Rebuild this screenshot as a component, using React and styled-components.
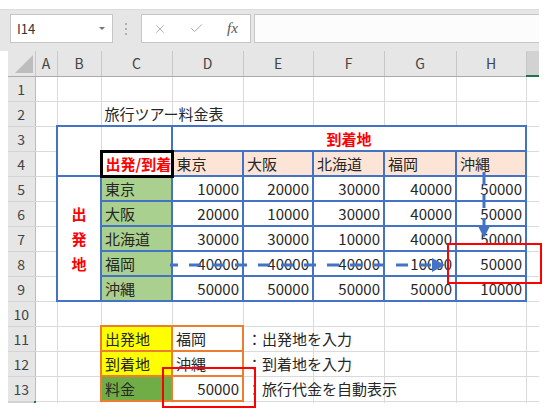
import styled, { createGlobalStyle } from "styled-components";
import { X, Check } from "lucide-react";

const BLUE = "#4472c4";
const ORANGE = "#ed7d31";
const GRID = "#dadada";
const RED = "#ff0000";

const GlobalStyle = createGlobalStyle`
  body {
    margin: 0;
    background: #fff;
    font-family: "Noto Sans CJK JP", "Noto Sans", sans-serif;
  }
`;

const Window = styled.div`
  position: relative;
  width: 548px;
  height: 418px;
  overflow: hidden;
  padding-top: 9px;
  box-sizing: border-box;
`;

const FormulaBar = styled.div`
  width: 539px;
  height: 42px;
  box-sizing: border-box;
  background: #e6e6e6;
  border-top: 1px solid #dcdcdc;
  padding: 4px 0 0 10px;
  display: flex;
  align-items: flex-start;
`;

const NameBox = styled.div`
  width: 103px;
  height: 29px;
  box-sizing: border-box;
  background: #fff;
  border: 1px solid #c6c6c6;
  padding: 0 6px;
  display: flex;
  align-items: center;
  font-size: 13px;
  color: #333;
`;

const Caret = styled.span`
  margin-left: auto;
  margin-right: 1px;
  border-left: 3px solid transparent;
  border-right: 3px solid transparent;
  border-top: 3px solid #777;
`;

const Grip = styled.div`
  margin: 9px 0 0 12px;
  display: flex;
  flex-direction: column;
  gap: 3px;
  span {
    width: 2px;
    height: 2px;
    background: #b0b0b0;
  }
`;

const IconBox = styled.div`
  margin-left: 14px;
  width: 110px;
  height: 29px;
  box-sizing: border-box;
  background: #fff;
  border: 1px solid #c6c6c6;
  padding-left: 11px;
  display: flex;
  align-items: center;
  gap: 22px;
  color: #a6a6a6;
`;

const Fx = styled.span`
  font-family: "Liberation Serif", serif;
  font-style: italic;
  font-size: 15px;
  color: #555;
  margin-left: 1px;
`;

const FormulaInput = styled.div`
  margin-left: 3px;
  flex: 1;
  height: 29px;
  box-sizing: border-box;
  background: #fcfcfc;
  border: 1px solid #c6c6c6;
  border-right: none;
`;

const SheetClip = styled.div`
  margin-left: 8px;
  width: 531px;
  overflow: hidden;
`;

const Sheet = styled.table`
  border-collapse: collapse;
  table-layout: fixed;
  width: 588px;
`;

const Row = styled.tr`
  height: ${(p) => p.$h || 25}px;
`;

const ColHead = styled.th`
  padding: 0;
  font-weight: normal;
  font-size: 14px;
  color: #444;
  text-align: center;
  background: ${(p) => (p.$active ? "#d2d2d2" : "#e6e6e6")};
  border: none;
  border-right: 1px solid #c8c8c8;
  border-bottom: ${(p) => (p.$active ? "2px solid #217346" : "1px solid #ababab")};
`;

const Corner = styled(ColHead)`
  text-align: right;
  vertical-align: bottom;
  svg {
    display: block;
    margin: 0 2px 3px auto;
  }
`;

const RowHead = styled.th`
  padding: 0;
  font-weight: normal;
  font-size: 14px;
  color: #444;
  text-align: center;
  background: #e6e6e6;
  border: none;
  border-right: 1px solid #bdbdbd;
  border-bottom: 1px solid #d4d4d4;
`;

const side = (p, s) =>
  p.$line && (p.$sides || "trbl").includes(s)
    ? `${p.$w || 2}px solid ${p.$line}`
    : `1px solid ${GRID}`;

const Cell = styled.td`
  padding: 0 3px;
  font-size: 15px;
  line-height: 1;
  white-space: nowrap;
  overflow: visible;
  vertical-align: middle;
  color: ${(p) => p.$color || "#262626"};
  font-weight: ${(p) => (p.$bold ? 700 : 400)};
  text-align: ${(p) => p.$align || "left"};
  background: ${(p) => p.$fill || "#fff"};
  border-top: ${(p) => side(p, "t")};
  border-right: ${(p) => side(p, "r")};
  border-bottom: ${(p) => side(p, "b")};
  border-left: ${(p) => side(p, "l")};
`;

const VerticalLabel = styled.div`
  line-height: 25px;
  text-align: center;
  color: ${RED};
  font-weight: 700;
`;

const Sliver = styled.td`
  padding: 0;
  font-size: 0;
  line-height: 0;
  border: none;
  border-top: 1px solid ${(p) => (p.$active ? "#217346" : "#c8c8c8")};
  border-left: 1px solid ${GRID};
`;

const SliverHead = styled(Sliver)`
  background: #d2d2d2;
  border-right: 2px solid #217346;
  border-left: none;
`;

const Annotations = styled.svg`
  position: absolute;
  top: 0;
  left: 0;
  pointer-events: none;
`;

// column I is cut off by the window edge, so its letter is not shown
const columns = ["A", "B", "C", "D", "E", "F", "G", "H", "I"];
const widths = [27, 22, 44, 71, 71, 70, 71, 72, 70, 70];

const cities = ["東京", "大阪", "北海道", "福岡", "沖縄"];
const fares = [
  [10000, 20000, 30000, 40000, 50000],
  [20000, 10000, 30000, 40000, 50000],
  [30000, 30000, 10000, 40000, 50000],
  [40000, 40000, 40000, 10000, 50000],
  [50000, 50000, 50000, 50000, 10000],
];

const Empty = ({ n }) =>
  Array.from({ length: n }, (_, i) => <Cell key={`e${i}`} />);

const App = () => {
  return (
    <Window>
      <GlobalStyle />
      <FormulaBar>
        <NameBox>
          I14
          <Caret />
        </NameBox>
        <Grip>
          <span />
          <span />
          <span />
        </Grip>
        <IconBox>
          <X size={14} strokeWidth={1.4} />
          <Check size={15} strokeWidth={1.6} />
          <Fx>fx</Fx>
        </IconBox>
        <FormulaInput />
      </FormulaBar>

      <SheetClip>
        <Sheet>
          <colgroup>
            {widths.map((w, i) => (
              <col key={i} style={{ width: w }} />
            ))}
          </colgroup>
          <tbody>
            <Row>
              <Corner>
                <svg width="18" height="18" viewBox="0 0 18 18">
                  <polygon points="0,18 18,0 18,18" fill="#bdbdbd" />
                </svg>
              </Corner>
              {columns.map((c) => (
                <ColHead key={c} $active={c === "I"}>
                  {c === "I" ? "" : c}
                </ColHead>
              ))}
            </Row>

            <Row>
              <RowHead>1</RowHead>
              <Empty n={9} />
            </Row>

            <Row>
              <RowHead>2</RowHead>
              <Empty n={2} />
              <Cell>旅行ツアー料金表</Cell>
              <Empty n={6} />
            </Row>

            <Row>
              <RowHead>3</RowHead>
              <Cell />
              <Cell rowSpan={2} $line={BLUE} $sides="tlb" />
              <Cell $line={BLUE} $sides="tr" />
              <Cell colSpan={5} $line={BLUE} $align="center" $color={RED} $bold>
                到着地
              </Cell>
              <Cell />
            </Row>

            <Row>
              <RowHead>4</RowHead>
              <Cell />
              <Cell $line="#000" $w={3} $color={RED} $bold>
                出発/到着
              </Cell>
              {cities.map((c) => (
                <Cell key={c} $line={BLUE} $fill="#fce4d6">
                  {c}
                </Cell>
              ))}
              <Cell />
            </Row>

            {cities.map((city, r) => (
              <Row key={city}>
                <RowHead>{r + 5}</RowHead>
                <Cell />
                {r === 0 && (
                  <Cell rowSpan={5} $line={BLUE}>
                    <VerticalLabel>
                      出<br />発<br />地
                    </VerticalLabel>
                  </Cell>
                )}
                <Cell $line={BLUE} $fill="#a9d08e">
                  {city}
                </Cell>
                {fares[r].map((v, i) => (
                  <Cell key={i} $line={BLUE} $align="right">
                    {v}
                  </Cell>
                ))}
                <Cell />
              </Row>
            ))}

            <Row>
              <RowHead>10</RowHead>
              <Empty n={9} />
            </Row>

            <Row>
              <RowHead>11</RowHead>
              <Empty n={2} />
              <Cell $line={ORANGE} $fill="#ffff00">出発地</Cell>
              <Cell $line={ORANGE}>福岡</Cell>
              <Cell>：出発地を入力</Cell>
              <Empty n={4} />
            </Row>

            <Row>
              <RowHead>12</RowHead>
              <Empty n={2} />
              <Cell $line={ORANGE} $fill="#ffff00">到着地</Cell>
              <Cell $line={ORANGE}>沖縄</Cell>
              <Cell>：到着地を入力</Cell>
              <Empty n={4} />
            </Row>

            <Row>
              <RowHead>13</RowHead>
              <Empty n={2} />
              <Cell $line={ORANGE} $fill="#70ad47">料金</Cell>
              <Cell $line={ORANGE} $align="right">50000</Cell>
              <Cell>：旅行代金を自動表示</Cell>
              <Empty n={4} />
            </Row>

            <Row $h={2}>
              <SliverHead />
              {columns.map((c) => (
                <Sliver key={c} $active={c === "I"} />
              ))}
            </Row>
          </tbody>
        </Sheet>
      </SheetClip>

      <Annotations width="548" height="418" viewBox="0 0 548 418">
        <line
          x1="170" y1="265" x2="433" y2="265"
          stroke={BLUE} strokeWidth="3"
          strokeDasharray="12 11" strokeDashoffset="4"
        />
        <polygon points="432,258 445,265 432,272" fill={BLUE} />
        <line
          x1="484" y1="172" x2="484" y2="227"
          stroke={BLUE} strokeWidth="3"
          strokeDasharray="13 10"
        />
        <polygon points="478,226 490,226 484,238" fill={BLUE} />
        <rect x="448" y="244" width="93" height="39" fill="none" stroke={RED} strokeWidth="2" />
        <rect x="163" y="368" width="92" height="39" fill="none" stroke={RED} strokeWidth="2" />
      </Annotations>
    </Window>
  );
};

export default App;
